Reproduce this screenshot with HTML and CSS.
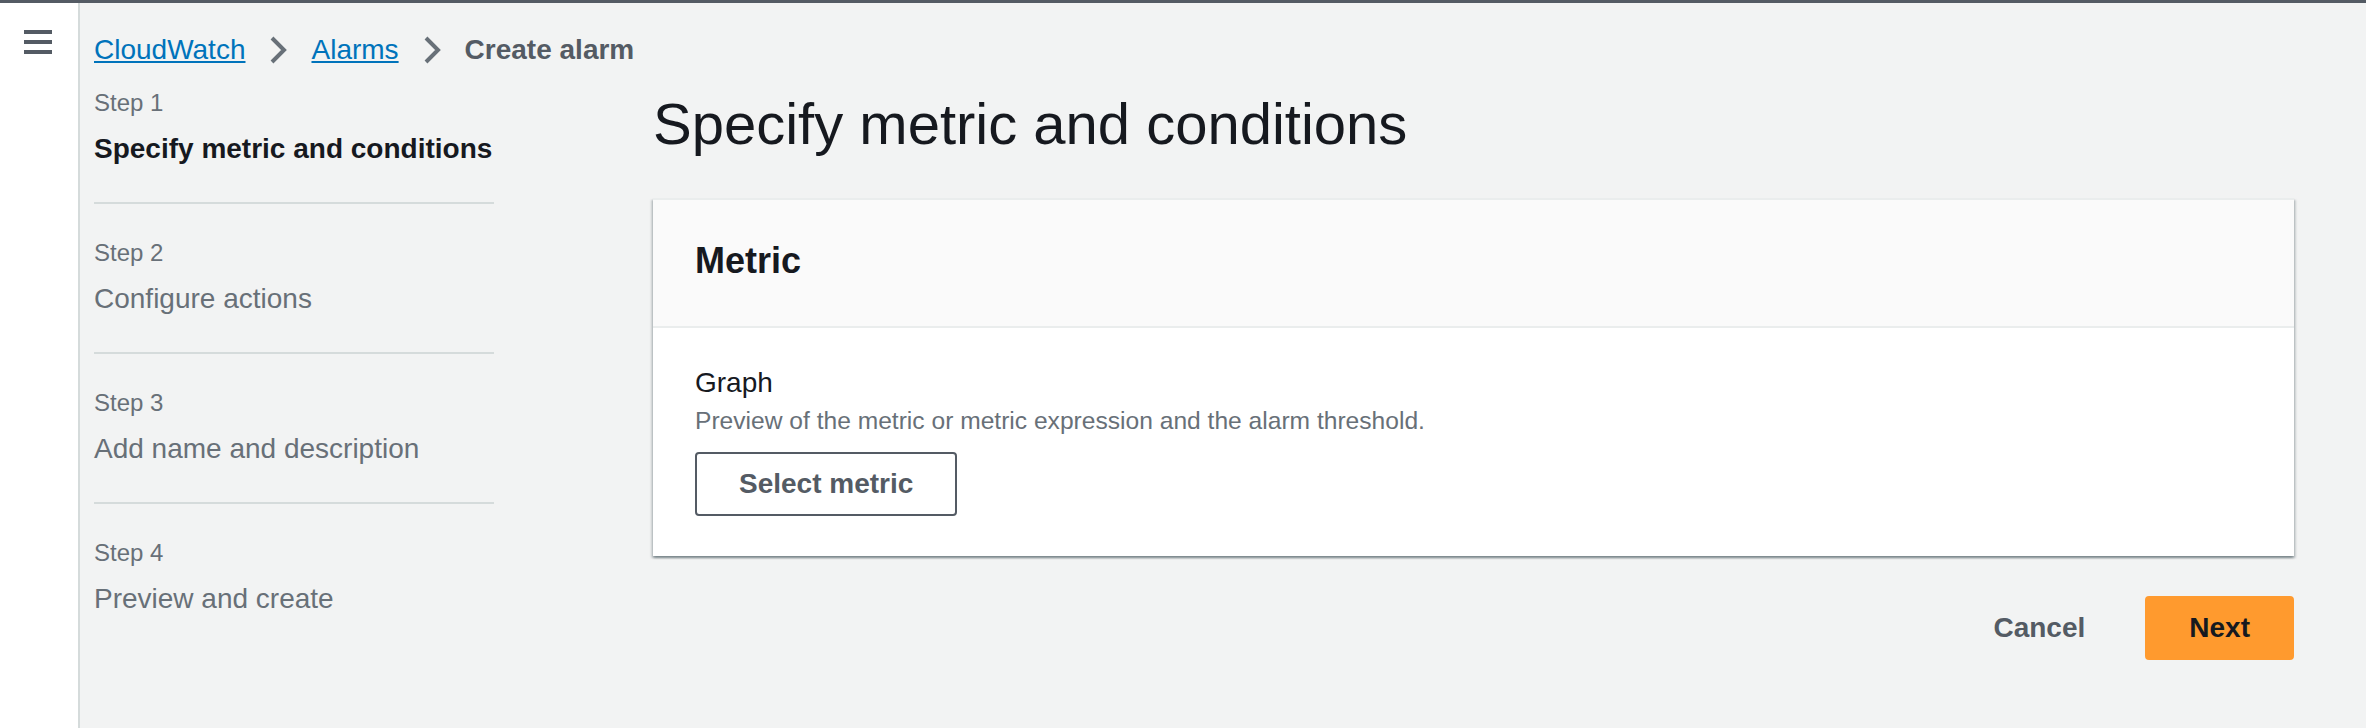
FILE: index.html
```html
<!DOCTYPE html>
<html lang="en">

<head>
    <meta charset="UTF-8">
    <meta name="viewport" content="width=device-width, initial-scale=1.0">
    <title>Create alarm | CloudWatch</title>
    <link rel="stylesheet" href="styles.css">
</head>

<body>
    <div class="app">
        <div class="rail">
            <a href="javascript:;" class="menu_btn" aria-label="Open navigation">
                <svg width="28" height="24" viewBox="0 0 28 24">
                    <rect x="0" y="0" width="28" height="4"></rect>
                    <rect x="0" y="10" width="28" height="4"></rect>
                    <rect x="0" y="20" width="28" height="4"></rect>
                </svg>
            </a>
        </div>
        <div class="content">
            <div class="crumbs">
                <a href="javascript:;">CloudWatch</a>
                <svg class="chev" width="32" height="32" viewBox="0 0 16 16">
                    <path d="M5 2l6 6-6 6"></path>
                </svg>
                <a href="javascript:;">Alarms</a>
                <svg class="chev" width="32" height="32" viewBox="0 0 16 16">
                    <path d="M5 2l6 6-6 6"></path>
                </svg>
                <span class="current">Create alarm</span>
            </div>

            <div class="wizard">
                <ul class="steps">
                    <li class="active">
                        <span class="step_no">Step 1</span>
                        <span class="step_name">Specify metric and conditions</span>
                    </li>
                    <li>
                        <span class="step_no">Step 2</span>
                        <span class="step_name">Configure actions</span>
                    </li>
                    <li>
                        <span class="step_no">Step 3</span>
                        <span class="step_name">Add name and description</span>
                    </li>
                    <li>
                        <span class="step_no">Step 4</span>
                        <span class="step_name">Preview and create</span>
                    </li>
                </ul>

                <div class="main">
                    <h1>Specify metric and conditions</h1>
                    <div class="card">
                        <div class="card_head">
                            <h2>Metric</h2>
                        </div>
                        <div class="card_body">
                            <div class="label">Graph</div>
                            <div class="desc">Preview of the metric or metric expression and the alarm threshold.</div>
                            <button class="btn">Select metric</button>
                        </div>
                    </div>
                    <div class="actions">
                        <button class="btn btn_link">Cancel</button>
                        <button class="btn btn_primary">Next</button>
                    </div>
                </div>
            </div>
        </div>
    </div>
</body>

</html>
```

FILE: styles.css
```css
* {
    margin: 0;
    padding: 0;
    box-sizing: border-box;
}

body {
    font-family: "Liberation Sans", Arial, sans-serif;
    font-size: 28px;
    color: #16191f;
    background-color: #f2f3f3;
}

.app {
    display: flex;
    min-height: 100vh;
    border-top: 3px solid #545b64;
}

.rail {
    width: 80px;
    flex-shrink: 0;
    background-color: #fff;
    border-right: 2px solid #d5dbdb;
    padding: 27px 0 0 24px;
}

.menu_btn {
    display: block;
    width: 28px;
    height: 24px;
}

.menu_btn svg {
    display: block;
    fill: #545b64;
}

.content {
    flex: 1;
    padding: 27px 72px 0 14px;
}

.crumbs {
    display: flex;
    align-items: center;
    height: 40px;
    line-height: 40px;
}

.crumbs a {
    color: #0073bb;
    text-decoration: underline;
    text-underline-offset: 2px;
}

.crumbs .chev {
    margin: 0 17px;
    fill: none;
    stroke: #687078;
    stroke-width: 2;
}

.crumbs .current {
    font-weight: bold;
    color: #545b64;
}

.wizard {
    display: grid;
    grid-template-columns: 400px 1fr;
    column-gap: 159px;
    margin-top: 14px;
}

.steps {
    list-style: none;
}

.steps li {
    display: flex;
    flex-direction: column;
    gap: 10px;
    padding: 33px 0;
    border-bottom: 2px solid #d5dbdb;
}

.steps li:first-child {
    padding-top: 3px;
}

.steps li:last-child {
    border-bottom: none;
}

.step_no {
    font-size: 24px;
    line-height: 32px;
    color: #687078;
}

.step_name {
    line-height: 40px;
    color: #687078;
}

.steps .active .step_name {
    font-weight: bold;
    color: #16191f;
}

h1 {
    font-size: 58px;
    font-weight: normal;
    line-height: 80px;
    margin-bottom: 34px;
}

.card {
    background-color: #fff;
    border-top: 2px solid #eaeded;
    box-shadow: 0 2px 2px 0 rgba(0, 28, 36, 0.3), 2px 2px 2px 0 rgba(0, 28, 36, 0.15), -2px 2px 2px 0 rgba(0, 28, 36, 0.15);
}

.card_head {
    background-color: #fafafa;
    border-bottom: 2px solid #eaeded;
    padding: 39px 42px 43px;
}

h2 {
    font-size: 36px;
    line-height: 44px;
    font-weight: bold;
}

.card_body {
    padding: 35px 42px 40px;
}

.label {
    line-height: 40px;
}

.desc {
    margin-top: 2px;
    font-size: 24.6px;
    line-height: 32px;
    color: #687078;
}

.btn {
    display: inline-block;
    font-family: inherit;
    font-size: 28px;
    font-weight: bold;
    line-height: 32px;
    padding: 14px 42px;
    border: 2px solid #545b64;
    border-radius: 4px;
    background-color: #fff;
    color: #545b64;
    cursor: pointer;
}

.card_body .btn {
    margin-top: 15px;
}

.actions {
    display: flex;
    justify-content: flex-end;
    gap: 16px;
    margin-top: 40px;
}

.btn_link {
    border-color: transparent;
    background-color: transparent;
}

.btn_primary {
    border-color: #ff9a2e;
    background-color: #ff9a2e;
    color: #16191f;
}
```
